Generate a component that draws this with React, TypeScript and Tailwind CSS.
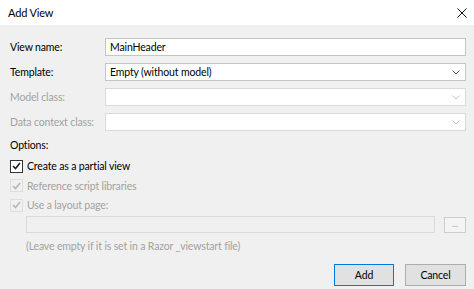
import React from 'react';

const font = { fontFamily: 'Lato, "Open Sans", sans-serif' };

function Chevron({ disabled }: { disabled?: boolean }) {
  return (
    <svg width="8" height="5" viewBox="0 0 8 5" className="absolute right-[5px] top-[6px]">
      <path d="M0.5 0.5 L4 4 L7.5 0.5" fill="none" stroke={disabled ? '#c4c4c4' : '#606060'} strokeWidth="1" />
    </svg>
  );
}

function Check({ disabled }: { disabled?: boolean }) {
  return (
    <div
      className={
        'w-[13px] h-[13px] shrink-0 border flex items-center justify-center ' +
        (disabled ? 'border-[#dedede] bg-[#f0f0f0]' : 'border-[#333333] bg-white')
      }
    >
      <svg width="9" height="8" viewBox="0 0 9 8">
        <path d="M1 4 L3.5 6.5 L8 1" fill="none" stroke={disabled ? '#b5b5b5' : '#1a1a1a'} strokeWidth="1.6" />
      </svg>
    </div>
  );
}

export default function App() {
  return (
    <div
      className="w-[474px] h-[289px] bg-[#f0f0f0] flex flex-col text-[10.5px] tracking-[-0.15px] leading-[16px] text-black overflow-hidden whitespace-nowrap"
      style={font}
    >
      <div className="h-[25px] bg-white flex items-center justify-between pl-[8px] pr-[7px] shrink-0 text-[11px]">
        <span>Add View</span>
        <svg width="10" height="10" viewBox="0 0 10 10">
          <path d="M0.5 0.5 L9.5 9.5 M9.5 0.5 L0.5 9.5" stroke="#111" strokeWidth="1" />
        </svg>
      </div>

      <div className="flex-1 flex flex-col pl-[10px] pr-[8px] pt-[13px]">
        <div className="grid grid-cols-[95px_1fr] gap-y-[7px] items-center">
          <span>View name:</span>
          <div className="h-[18px] bg-white border border-[#c5c5c5] flex items-center px-[4px]">MainHeader</div>

          <span>Template:</span>
          <div className="relative h-[18px] bg-white border border-[#c5c5c5] flex items-center px-[4px]">
            Empty (without model)
            <Chevron />
          </div>

          <span className="text-[#a2a2a2]">Model class:</span>
          <div className="relative h-[18px] bg-white border border-[#d9d9d9]">
            <Chevron disabled />
          </div>

          <span className="text-[#a2a2a2]">Data context class:</span>
          <div className="relative h-[18px] bg-white border border-[#d9d9d9]">
            <Chevron disabled />
          </div>
        </div>

        <div className="mt-[6px] h-[16px]">Options:</div>

        <div className="mt-[3px] flex flex-col">
          <div className="h-[20px] flex items-center gap-[4px]">
            <Check />
            <span>Create as a partial view</span>
          </div>
          <div className="h-[19px] flex items-center gap-[4px] text-[#a2a2a2]">
            <Check disabled />
            <span>Reference script libraries</span>
          </div>
          <div className="h-[20px] flex items-center gap-[4px] text-[#a2a2a2]">
            <Check disabled />
            <span>Use a layout page:</span>
          </div>
        </div>

        <div className="mt-[1px] pl-[16px] flex items-center">
          <div className="flex-1 h-[17px] bg-[#f0f0f0] border border-[#d9d9d9]" />
          <div className="ml-[9px] w-[22px] h-[16px] border border-[#cccccc] bg-[#f4f4f4] flex items-center justify-center text-[#a8a8a8] text-[9px] leading-none pb-[2px]">
            ...
          </div>
        </div>

        <div className="mt-[5px] pl-[16px] h-[16px] text-[#a2a2a2]">
          (Leave empty if it is set in a Razor _viewstart file)
        </div>

        <div className="mt-[10px] flex justify-end gap-[11px]">
          <button className="w-[60px] h-[22px] bg-[#e1e1e1] border border-[#0078d7] flex items-center justify-center">
            Add
          </button>
          <button className="w-[61px] h-[22px] bg-[#e1e1e1] border border-[#adadad] flex items-center justify-center">
            Cancel
          </button>
        </div>
      </div>
    </div>
  );
}
